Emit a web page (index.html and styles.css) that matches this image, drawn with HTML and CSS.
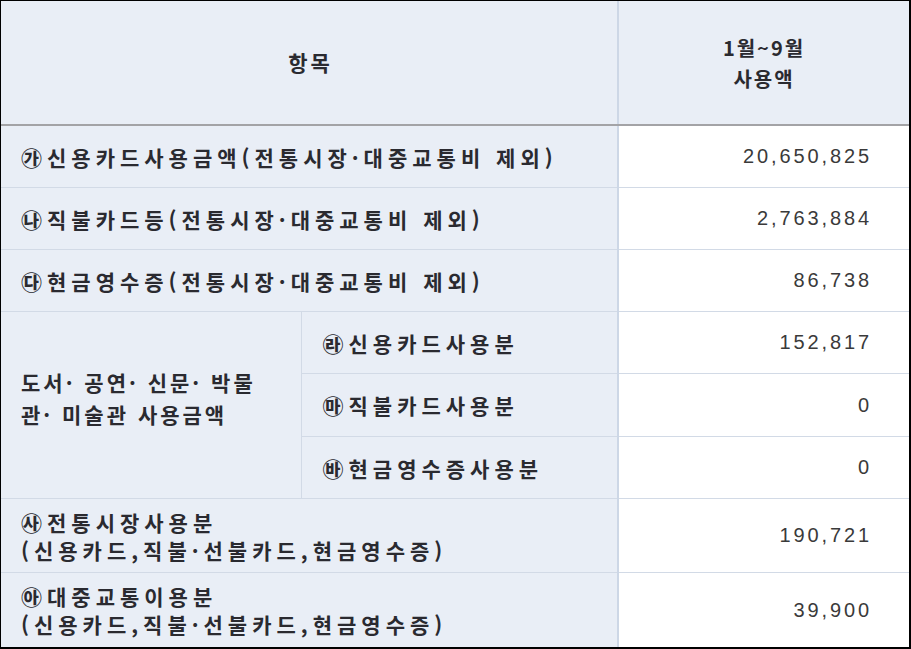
FILE: index.html
```html
<!DOCTYPE html>
<html lang="ko">
<head>
<meta charset="utf-8">
<link rel="stylesheet" href="styles.css">
</head>
<body>
<div class="frame">
<table class="usage">
  <colgroup><col class="c1"><col class="c2"><col class="c3"></colgroup>
  <thead>
    <tr class="head">
      <th colspan="2" class="lab">항목</th>
      <th class="val">1월~9월<br>사용액</th>
    </tr>
  </thead>
  <tbody>
    <tr class="r">
      <td colspan="2" class="lab">㉮신용카드사용금액(전통시장·대중교통비 제외)</td>
      <td class="num">20,650,825</td>
    </tr>
    <tr class="r">
      <td colspan="2" class="lab">㉯직불카드등(전통시장·대중교통비 제외)</td>
      <td class="num">2,763,884</td>
    </tr>
    <tr class="r">
      <td colspan="2" class="lab">㉰현금영수증(전통시장·대중교통비 제외)</td>
      <td class="num">86,738</td>
    </tr>
    <tr class="r">
      <td rowspan="3" class="lab group">도서· 공연· 신문· 박물<br>관· 미술관 사용금액</td>
      <td class="lab sub">㉱신용카드사용분</td>
      <td class="num">152,817</td>
    </tr>
    <tr class="r5">
      <td class="lab sub">㉲직불카드사용분</td>
      <td class="num">0</td>
    </tr>
    <tr class="r">
      <td class="lab sub">㉳현금영수증사용분</td>
      <td class="num">0</td>
    </tr>
    <tr class="r7">
      <td colspan="2" class="lab two">㉴전통시장사용분<br>(신용카드,직불·선불카드,현금영수증)</td>
      <td class="num">190,721</td>
    </tr>
    <tr class="r8">
      <td colspan="2" class="lab two">㉵대중교통이용분<br>(신용카드,직불·선불카드,현금영수증)</td>
      <td class="num">39,900</td>
    </tr>
  </tbody>
</table>
</div>
</body>
</html>
```

FILE: styles.css
```css
html, body {
  margin: 0;
  padding: 0;
  background: #ffffff;
}
.frame {
  width: 908px;
  height: 646px;
  border-top: 1px solid #000;
  border-left: 1px solid #000;
  border-right: 2px solid #000;
  border-bottom: 2px solid #000;
  overflow: hidden;
}
.usage {
  width: 908px;
  border-collapse: collapse;
  table-layout: fixed;
  font-family: "Noto Sans CJK KR", "Noto Sans", sans-serif;
  color: #2a2a30;
}
.c1 { width: 300px; }
.c2 { width: 317px; }
.c3 { width: 291px; }
.usage th, .usage td {
  padding: 0;
  border-bottom: 1px solid #d2dae6;
}
.lab {
  background: #e9eef6;
  font-weight: 700;
  font-size: 21px;
  letter-spacing: 5px;
  text-align: left;
  padding-left: 20px !important;
  line-height: 28px;
}
.head th {
  height: 123px;
  border-bottom: 2px solid #a3a3a6;
  background: #e9eef6;
  font-weight: 700;
  font-size: 20px;
  letter-spacing: 2px;
  line-height: 31px;
}
.head th.lab {
  text-align: center;
  padding-left: 3px !important;
  font-size: 21px;
  letter-spacing: 3px;
}
.head th.val {
  text-align: center;
  border-left: 2px solid #cdd7e6;
}
.r td { height: 61px; }
.r5 td { height: 62px; }
.r7 td { height: 73px; }
.r8 td { height: 74px; border-bottom: none; }
.num {
  border-left: 2px solid #cdd7e6;
  text-align: right;
  padding-right: 37px !important;
  font-family: "Liberation Sans", sans-serif;
  font-size: 20px;
  letter-spacing: 2.9px;
  color: #3a3a3a;
  background: #ffffff;
}
.group {
  border-right: 1px solid #d2dae6;
  line-height: 32px;
  padding-bottom: 14px !important;
  letter-spacing: 3px;
}
.sub {
  padding-left: 21px !important;
}
.two {
  line-height: 28px;
}
```
